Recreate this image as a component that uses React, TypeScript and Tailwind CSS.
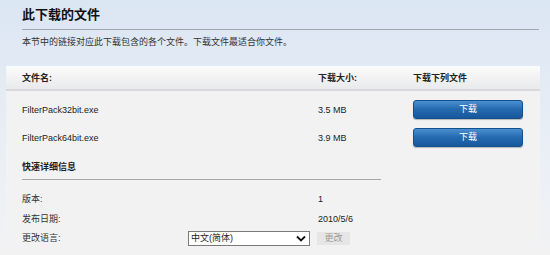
const font = { fontFamily: '"Liberation Sans", "Noto Sans CJK SC", sans-serif' };

const files = [
  { name: 'FilterPack32bit.exe', size: '3.5 MB' },
  { name: 'FilterPack64bit.exe', size: '3.9 MB' },
];

function DownloadButton() {
  return (
    <button className="flex h-[19px] w-[110px] items-center justify-center rounded-[3px] border border-[#13508f] bg-gradient-to-b from-[#4a8fd0] via-[#2469b0] to-[#17589c] text-[9px] leading-[12px] text-white shadow-[0_1px_1px_rgba(0,0,0,0.25)]">
      下载
    </button>
  );
}

export default function App() {
  return (
    <div
      style={font}
      className="h-[255px] w-[550px] overflow-hidden bg-gradient-to-b from-[#dbe6f3] via-[#eaeff6] via-60% to-[#f2f2f3] text-[#222]"
    >
      <div className="pl-[22px] pr-[11px] pt-[7px]">
        <h2 className="border-b border-[#a3a8ae] pb-[6px] text-[13px] font-bold leading-[16px] text-[#111]">
          此下载的文件
        </h2>
        <p className="mt-[6px] text-[9px] leading-[12px] text-[#333]">
          本节中的链接对应此下载包含的各个文件。下载文件最适合你文件。
        </p>
      </div>

      <div className="ml-[6px] mt-[18px] w-[534px] bg-[#f2f2f3] pb-[40px]">
        <div className="grid h-[25px] grid-cols-[296px_95px_1fr] items-center border-b-2 border-[#d6d8db] bg-gradient-to-b from-[#fbfbfb] to-[#e9eaec] pl-[16px] text-[9px] font-bold leading-[12px] text-[#222]">
          <span>文件名:</span>
          <span>下载大小:</span>
          <span>下载下列文件</span>
        </div>

        <div className="pt-[4px]">
          {files.map((f) => (
            <div
              key={f.name}
              className="grid h-[28px] grid-cols-[296px_95px_1fr] items-center pl-[16px] text-[9px] leading-[12px]"
            >
              <span className="pt-[1px]">{f.name}</span>
              <span className="pt-[1px]">{f.size}</span>
              <DownloadButton />
            </div>
          ))}
        </div>

        <div className="pl-[16px] pt-[10px]">
          <h3 className="w-[359px] border-b border-[#a7a7a7] pb-[6px] text-[9px] font-bold leading-[12px]">
            快速详细信息
          </h3>
          <div className="mt-[9px] flex h-[20px] items-center text-[9px] leading-[12px]">
            <span className="w-[296px] text-[#333]">版本:</span>
            <span>1</span>
          </div>
          <div className="flex h-[20px] items-center text-[9px] leading-[12px]">
            <span className="w-[296px] text-[#333]">发布日期:</span>
            <span>2010/5/6</span>
          </div>
          <div className="flex h-[18px] items-center text-[9px] leading-[12px]">
            <span className="w-[166px] text-[#333]">更改语言:</span>
            <div className="flex h-[15px] w-[122px] items-center justify-between border border-[#7a7a7a] bg-white pl-[2px] pr-[3px]">
              <span>中文(简体)</span>
              <svg width="10" height="7" viewBox="0 0 10 7">
                <path d="M1 1.5 L5 5.5 L9 1.5" fill="none" stroke="#111" strokeWidth="1.8" />
              </svg>
            </div>
            <button className="ml-[7px] h-[13px] w-[33px] bg-[#e6e6e6] text-[9px] leading-[13px] text-[#9a9a9a]">
              更改
            </button>
          </div>
        </div>
      </div>
    </div>
  );
}
